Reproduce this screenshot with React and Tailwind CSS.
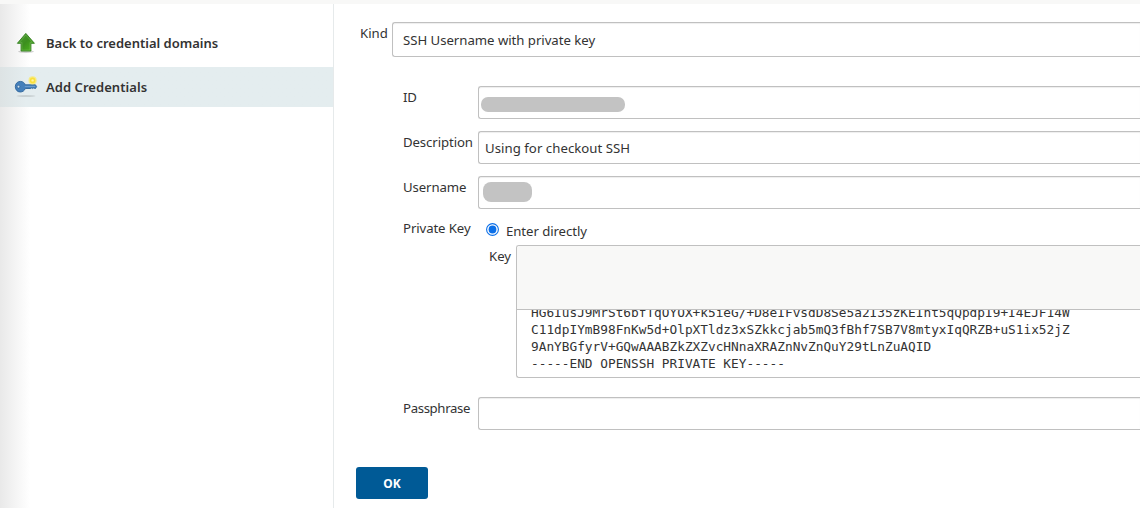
import React from "react";

const keyLines = [
  "HG6IusJ9MrSt6bfTqOYOX+k5ieG/+D8eIFvsdD8Se5a2I35zKEIht5qQpdpI9+I4EJF14W",
  "C11dpIYmB98FnKw5d+OlpXTldz3xSZkkcjab5mQ3fBhf7SB7V8mtyxIqQRZB+uS1ix52jZ",
  "9AnYBGfyrV+GQwAAABZkZXZvcHNnaXRAZnNvZnQuY29tLnZuAQID",
  "-----END OPENSSH PRIVATE KEY-----",
];

function UpIcon() {
  return (
    <svg width="24" height="24" viewBox="0 0 24 24" className="shrink-0">
      <defs>
        <linearGradient id="up" x1="0" y1="0" x2="1" y2="1">
          <stop offset="0" stopColor="#4b9a35" />
          <stop offset="0.5" stopColor="#3c8f1e" />
          <stop offset="1" stopColor="#4fbb1c" />
        </linearGradient>
      </defs>
      <ellipse cx="12" cy="20.6" rx="8" ry="1.3" fill="#000" opacity="0.18" />
      <path d="M11.8 2.4 20.4 12.3H16.9V20H7.1V12.3H3.4Z" fill="url(#up)" stroke="#3d8728" strokeWidth="1" strokeLinejoin="round" />
      <path d="M11.8 4 18.2 11.4H16V19.1H8V11.4H5.5Z" fill="none" stroke="#86c46c" strokeWidth="0.6" opacity="0.6" />
    </svg>
  );
}

function KeyIcon() {
  return (
    <svg width="24" height="24" viewBox="0 0 24 24" className="shrink-0">
      <ellipse cx="12" cy="21" rx="9.6" ry="0.8" fill="#000" opacity="0.16" />
      <path
        d="M6.3 6.4C9 6.4 10.6 8 11.3 9.8H21.4L22.6 11.5 21.6 13.4H20.6L19.8 12.8 18.8 13.6 17.8 12.8 16.8 13.5H11.3C10.5 15.6 8.7 17 6.3 17 3.3 17 1.3 14.6 1.3 11.7S3.3 6.4 6.3 6.4Z"
        fill="#4580bb"
        stroke="#2f659b"
        strokeWidth="0.9"
        strokeLinejoin="round"
      />
      <path d="M10.8 11.4H21" stroke="#82aedb" strokeWidth="0.7" />
      <circle cx="4.5" cy="11.7" r="1.4" fill="#d3e3ee" stroke="#2f659b" strokeWidth="0.8" />
      <circle cx="18.6" cy="5.4" r="4.1" fill="#fbe967" opacity="0.75" />
      <circle cx="18.6" cy="5.4" r="2.8" fill="#fadf3b" />
      <circle cx="18.6" cy="5.4" r="1.2" fill="#fff3a0" />
    </svg>
  );
}

function Row({ label, children, className }) {
  return (
    <div className={"flex items-start " + className}>
      <div className="w-[75px] shrink-0 pt-px leading-[20px] tracking-[-0.1px] whitespace-nowrap">{label}</div>
      {children}
    </div>
  );
}

function Field({ children }) {
  return (
    <div className="flex h-[33px] min-w-0 flex-1 items-center rounded-l-[3px] border border-r-0 border-[#c0c0c0] bg-white shadow-[inset_0_1px_1px_rgba(0,0,0,0.07)]">
      {children}
    </div>
  );
}

export default function App() {
  return (
    <div className="flex h-[508px] w-[1140px] flex-col overflow-hidden bg-white font-['Noto_Sans','Open_Sans',sans-serif] text-[13.2px] text-[#333]">
      <div className="h-1 shrink-0 bg-[#f8f8f7]" />
      <div className="flex min-h-0 flex-1">
        <aside className="w-[334px] shrink-0 border-r border-[#e6eaeb] bg-gradient-to-r from-[#e9e9e9] to-white to-[30px] pt-[19px] text-[13px] font-semibold">
          <a className="flex h-10 items-center gap-[8px] pl-[14px]">
            <UpIcon />
            <span className="pt-[2px] whitespace-nowrap">Back to credential domains</span>
          </a>
          <a className="mt-1 flex h-10 items-center gap-[8px] bg-gradient-to-r from-[#dde3e4] to-[#e4edef] to-[26px] pl-[14px]">
            <KeyIcon />
            <span className="pt-[2px] tracking-[0.05px] whitespace-nowrap">Add Credentials</span>
          </a>
        </aside>

        <main className="min-w-0 flex-1 pl-[22px]">
          <div className="flex items-start pt-[18px] pl-1">
            <div className="w-8 shrink-0 pt-px leading-[20px]">Kind</div>
            <div className="flex h-[35px] flex-1 items-center rounded-l-[3px] border border-r-0 border-[#c0c0c0] pl-[10px] shadow-[inset_0_1px_1px_rgba(0,0,0,0.07)]">
              <span className="pt-[2px] tracking-[-0.03px] whitespace-nowrap">SSH Username with private key</span>
            </div>
          </div>

          <div className="pl-[47px]">
            <Row label="ID" className="mt-[29px]">
              <Field>
                <div className="mt-[3px] ml-[2px] h-[15px] w-[144px] rounded-[7px] bg-[#c3c3c3]" />
              </Field>
            </Row>
            <Row label="Description" className="mt-3">
              <Field>
                <span className="pt-[2px] pl-[6px] tracking-[0.04px] whitespace-nowrap">Using for checkout SSH</span>
              </Field>
            </Row>
            <Row label="Username" className="mt-3">
              <Field>
                <div className="mb-px ml-1 h-5 w-[49px] rounded-[8px] bg-[#c3c3c3]" />
              </Field>
            </Row>
            <Row label="Private Key" className="mt-[8px]">
              <div className="flex h-[28px] items-center pl-2">
                <svg width="13" height="13" viewBox="0 0 13 13" className="mb-[3px]">
                  <circle cx="6.5" cy="6.5" r="5.9" fill="#fff" stroke="#0b6fe8" strokeWidth="1.1" />
                  <circle cx="6.5" cy="6.5" r="3.9" fill="#0b6fe8" />
                </svg>
                <span className="pt-[2px] pl-[7px] tracking-[-0.07px] whitespace-nowrap">Enter directly</span>
              </div>
            </Row>
            <div className="flex items-start pl-[86px]">
              <div className="w-[27px] shrink-0 pt-px leading-[20px]">Key</div>
              <div className="h-[133px] flex-1 overflow-hidden rounded-l-[3px] border border-r-0 border-[#c0c0c0]">
                <div className="h-16 border-b border-[#c0c0c0] bg-[#f8f8f7]" />
                <div className="-mt-[6px] h-[70px] pl-[14px] [clip-path:inset(6px_0_0_0)]">
                  <pre className="font-['DejaVu_Sans_Mono','Liberation_Mono',monospace] text-[12.79px] leading-[17px]">
                    {keyLines.join("\n")}
                  </pre>
                </div>
              </div>
            </div>
            <Row label="Passphrase" className="mt-[19px] [&>div:first-child]:tracking-[-0.35px]">
              <Field />
            </Row>
          </div>

          <button className="mt-[37px] flex h-8 w-[72px] items-center justify-center rounded-[3px] bg-[#005a96] pt-[2px] text-[12px] font-bold text-white">
            OK
          </button>
        </main>
      </div>
    </div>
  );
}
